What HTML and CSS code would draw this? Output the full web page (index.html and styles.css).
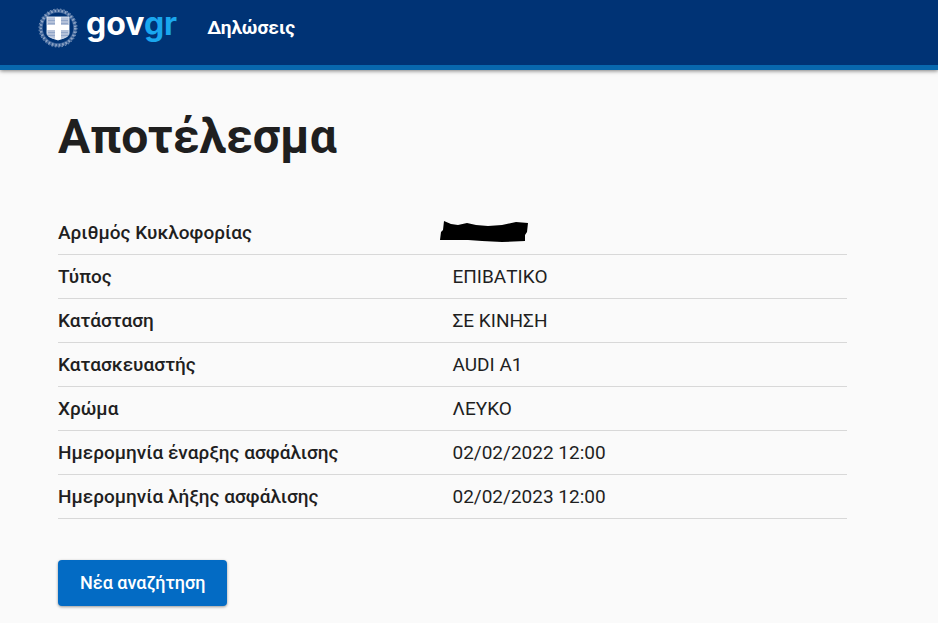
FILE: index.html
```html
<!DOCTYPE html>
<html lang="el">
<head>
    <meta charset="UTF-8">
    <meta name="viewport" content="width=device-width, initial-scale=1.0">
    <title>Δηλώσεις - Αποτέλεσμα</title>
    <link rel="stylesheet" href="styles.css">
</head>
<body>
    <header class="header">
        <a class="logo" href="#" aria-label="govgr">
            <svg class="emblem" viewBox="0 0 40 40" aria-hidden="true">
                <!-- wreath -->
                <circle cx="20" cy="20" r="17" fill="none" stroke="#7f9ac2" stroke-width="3.4" opacity="0.5"/>
                <circle cx="20" cy="20" r="17.2" fill="none" stroke="#c3cfe2" stroke-width="2.4" stroke-dasharray="1.6 1.9" opacity="0.6"/>
                <circle cx="20" cy="20" r="19" fill="none" stroke="#c5d0e3" stroke-width="1" stroke-dasharray="1.5 2" opacity="0.6"/>
                <!-- shield -->
                <path d="M9 9h22v16c0 4-5 5-11 7c-6-2-11-3-11-7z" fill="#b4c1d9" stroke="#dbe3ef" stroke-width="1"/>
                <path d="M10 12.5h7M10 15.5h7M23 12.5h7M23 15.5h7M10 24.5h7M10 27.5h7M23 24.5h7M23 27.5h7" stroke="#93a7c9" stroke-width="1"/>
                <path d="M17 9h6v8h8v5h-8v9l-3 1l-3-1v-9h-8v-5h8z" fill="#fff"/>
            </svg>
            <span class="logo-text">gov<span class="logo-gr">gr</span></span>
        </a>
        <a class="service" href="#">Δηλώσεις</a>
    </header>

    <main class="container">
        <h1>Αποτέλεσμα</h1>
        <table class="results">
            <tr>
                <th scope="row">Αριθμός Κυκλοφορίας</th>
                <td>
                    <svg class="redacted" viewBox="0 0 88 22" role="img" aria-label="Κρυμμένος αριθμός">
                        <path d="M4 0L11 3L18 4L27 2L36 4L48 5L62 4L76 1L88 2L87 11L85 14V20L62 21L42 20L28 19L0 19L1 11L3 9Z"/>
                    </svg>
                </td>
            </tr>
            <tr>
                <th scope="row">Τύπος</th>
                <td>ΕΠΙΒΑΤΙΚΟ</td>
            </tr>
            <tr>
                <th scope="row">Κατάσταση</th>
                <td>ΣΕ ΚΙΝΗΣΗ</td>
            </tr>
            <tr>
                <th scope="row">Κατασκευαστής</th>
                <td>AUDI A1</td>
            </tr>
            <tr>
                <th scope="row">Χρώμα</th>
                <td>ΛΕΥΚΟ</td>
            </tr>
            <tr>
                <th scope="row">Ημερομηνία έναρξης ασφάλισης</th>
                <td>02/02/2022 12:00</td>
            </tr>
            <tr>
                <th scope="row">Ημερομηνία λήξης ασφάλισης</th>
                <td>02/02/2023 12:00</td>
            </tr>
        </table>
        <button class="button" type="button">Νέα αναζήτηση</button>
    </main>
</body>
</html>
```

FILE: styles.css
```css
* {
    box-sizing: border-box;
}
body {
    margin: 0;
    font-family: Roboto, "Noto Sans", sans-serif;
    font-size: 19px;
    line-height: 24px;
    color: #1f1f1f;
    background-color: #fafafa;
}
.header {
    display: flex;
    align-items: flex-start;
    gap: 30px;
    height: 70px;
    padding: 4px 38px 0;
    background-color: #003375;
    border-bottom: 5px solid #0868ae;
    box-shadow: 0 1px 4px rgba(0, 0, 0, 0.5);
}
.header a {
    color: #fff;
    text-decoration: none;
}
.logo {
    display: flex;
    align-items: flex-start;
    gap: 8px;
}
.emblem {
    width: 40px;
    height: 40px;
    margin-top: 4px;
}
.logo-text {
    font-family: Inter, sans-serif;
    font-size: 32px;
    font-weight: 700;
    line-height: 40px;
}
.logo-gr {
    color: #1aa7ee;
}
.service {
    padding-top: 12px;
    font-weight: bold;
}
.container {
    max-width: 1100px;
    padding: 37px 91px 16px 58px;
}
h1 {
    margin: 0 0 44px;
    font-size: 48px;
    font-weight: bold;
    line-height: 60px;
}
.results {
    width: 100%;
    table-layout: fixed;
    border-collapse: collapse;
}
.results th,
.results td {
    padding: 10px 0 9px;
    border-bottom: 1px solid #d8d8d8;
    text-align: left;
    vertical-align: top;
    font-weight: normal;
}
.results th {
    font-weight: 500;
}
/* the marker runs a little to the left of the value column */
.redacted {
    display: block;
    width: 88px;
    height: 22px;
    margin-left: -13px;
}
.button {
    margin-top: 41px;
    padding: 11px 22px;
    border: none;
    border-radius: 4px;
    background-color: #036bc4;
    color: #fff;
    font-family: inherit;
    font-size: 18px;
    font-weight: 500;
    line-height: 24px;
    box-shadow: 0 1px 3px rgba(0, 0, 0, 0.4);
    cursor: pointer;
}
.button:hover {
    background-color: #0056a3;
}
```
